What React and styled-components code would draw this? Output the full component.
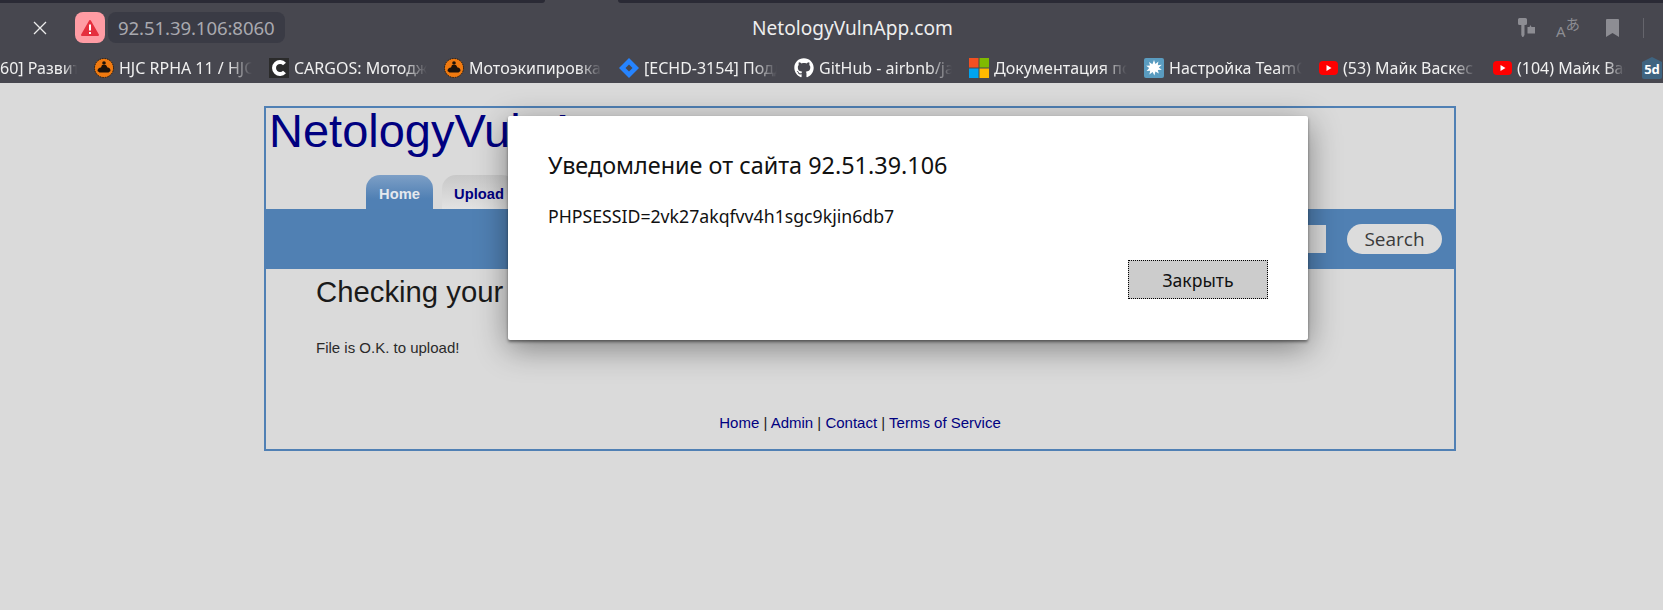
import React from "react";
import styled, { createGlobalStyle } from "styled-components";
import { FaGithub } from "react-icons/fa";

const GlobalStyle = createGlobalStyle`
    html, body {
        margin: 0;
        padding: 0;
        height: 100%;
        overflow: hidden;
        background: #dadada;
    }
`;

const Screen = styled.div`
    position: relative;
    width: 1663px;
    height: 610px;
    overflow: hidden;
    background: #dadada;
`;

/* browser chrome */
const Chrome = styled.header`
    height: 83px;
    background: #47474f;
    font-family: "Noto Sans", sans-serif;
`;

const TabStrip = styled.div`
    display: flex;
    justify-content: space-between;
    height: 3px;
`;

const TabStripPart = styled.div`
    width: ${props => props.$width}px;
    background: #2a2a35;
    border-radius: ${props => props.$right ? "0 0 0 3px" : "0 0 3px 0"};
`;

const AddressBar = styled.div`
    display: flex;
    align-items: center;
    height: 49px;
`;

const CloseButton = styled.div`
    display: flex;
    justify-content: center;
    width: 14px;
    margin: 0 28px 0 33px;
`;

const WarningBadge = styled.div`
    display: flex;
    align-items: center;
    justify-content: center;
    width: 30px;
    height: 31px;
    border-radius: 8px;
    background: #ff9ca4;
`;

const UrlPill = styled.div`
    display: flex;
    align-items: center;
    width: 177px;
    height: 31px;
    margin-left: 3px;
    padding-left: 10px;
    box-sizing: border-box;
    border-radius: 8px;
    background: #3a3b45;
    color: #a9a9af;
    font-size: 18.6px;
    letter-spacing: -0.1px;
    white-space: nowrap;
`;

const PageTitle = styled.div`
    width: 200px;
    margin-left: 467px;
    color: #eeeeee;
    font-size: 19.1px;
    white-space: nowrap;
`;

const ToolIcons = styled.div`
    display: flex;
    align-items: center;
    margin-left: auto;
    margin-right: 19px;
`;

const ToolIcon = styled.div`
    display: flex;
    align-items: center;
    justify-content: center;
    margin-right: ${props => props.$gap}px;
`;

const TranslateIcon = styled.div`
    position: relative;
    width: 24px;
    height: 24px;
    color: #8d8d93;
    font-family: "Noto Sans CJK JP", sans-serif;
`;

const TranslateLatin = styled.span`
    position: absolute;
    left: 0;
    bottom: -1px;
    font-family: "Noto Sans", sans-serif;
    font-size: 15px;
`;

const TranslateKana = styled.span`
    position: absolute;
    top: -3px;
    right: 0;
    font-size: 14.5px;
`;

const Divider = styled.div`
    width: 1px;
    height: 20px;
    background: #65656c;
`;

const Bookmarks = styled.nav`
    display: flex;
    align-items: center;
    gap: 17px;
    height: 31px;
    overflow: hidden;
    white-space: nowrap;
`;

const Bookmark = styled.div`
    display: flex;
    flex: none;
    align-items: center;
    gap: 5px;
`;

const BookmarkLabel = styled.span`
    display: block;
    width: ${props => props.$width || 133}px;
    margin-top: 1px;
    overflow: hidden;
    color: #f0f0f0;
    font-size: 16px;
    line-height: 22px;
    -webkit-mask-image: linear-gradient(to right, #000 82%, transparent 100%);
    mask-image: linear-gradient(to right, #000 82%, transparent 100%);
`;

/* the site under the alert */
const Frame = styled.main`
    box-sizing: border-box;
    width: 1192px;
    height: 345px;
    margin: 23px 0 0 264px;
    border: 2px solid #5080b4;
    font-family: "Liberation Sans", Arial, sans-serif;
`;

const SiteTitle = styled.h1`
    height: 67px;
    margin: 0;
    padding-left: 3px;
    color: #000080;
    font-size: 47px;
    font-weight: 400;
    line-height: 46px;
`;

const Tabs = styled.div`
    display: flex;
    gap: 9px;
    height: 34px;
    padding-left: 100px;
`;

const Tab = styled.div`
    display: flex;
    justify-content: center;
    width: ${props => props.$width}px;
    padding-top: 11px;
    box-sizing: border-box;
    border-radius: 14px 14px 0 0;
    background: ${props => props.$active
        ? "linear-gradient(#7d9fc6, #5080b4 70%)"
        : "linear-gradient(#c8c8c8, #e2e2e2)"};
    color: ${props => props.$active ? "#e4e8ee" : "#000080"};
    font-size: 14.7px;
    font-weight: 700;
`;

const SearchBar = styled.div`
    display: flex;
    align-items: center;
    justify-content: flex-end;
    gap: 21px;
    height: 60px;
    padding-right: 12px;
    background: #5080b3;
`;

const SearchInput = styled.div`
    width: 120px;
    height: 28px;
    background: #dcdcdc;
`;

const SearchButton = styled.div`
    display: flex;
    align-items: center;
    justify-content: center;
    width: 95px;
    height: 30px;
    border-radius: 15px;
    background: #dcdcdc;
    color: #3a3a3a;
    font-family: "Open Sans", sans-serif;
    font-size: 19px;
`;

const Content = styled.section`
    padding-left: 50px;
    color: #1a1a1a;
`;

const Heading = styled.h2`
    height: 56px;
    margin: 0;
    padding-top: 6px;
    box-sizing: border-box;
    font-size: 29.3px;
    font-weight: 400;
    line-height: 34px;
`;

const Message = styled.p`
    height: 89px;
    margin: 0;
    padding-top: 15px;
    box-sizing: border-box;
    color: #2a2a2a;
    font-size: 15px;
    line-height: 16px;
`;

const Footer = styled.footer`
    color: #1a1a1a;
    font-size: 15px;
    line-height: 18px;
    text-align: center;
`;

const FooterLink = styled.a`
    color: #000080;
    text-decoration: none;
`;

/* the alert */
const Alert = styled.div`
    position: absolute;
    top: 116px;
    left: 508px;
    display: flex;
    flex-direction: column;
    box-sizing: border-box;
    width: 800px;
    height: 224px;
    padding: 0 40px;
    background: #ffffff;
    border-radius: 2px;
    box-shadow: 0 2px 3px rgba(0, 0, 0, 0.45), 0 8px 32px rgba(0, 0, 0, 0.42);
    font-family: "Noto Sans", sans-serif;
    color: #111111;
`;

const AlertTitle = styled.div`
    margin-top: 35px;
    font-size: 23.4px;
    line-height: 29px;
`;

const AlertText = styled.div`
    margin-top: 25px;
    font-size: 17.7px;
    line-height: 22px;
    white-space: nowrap;
`;

const AlertActions = styled.div`
    display: flex;
    justify-content: flex-end;
    margin-top: auto;
    margin-bottom: 41px;
`;

const CloseAlert = styled.button`
    width: 140px;
    height: 39px;
    padding: 0;
    border: 1px dotted #000000;
    border-radius: 0;
    background: #cccccc;
    color: #111111;
    font-family: "Noto Sans", sans-serif;
    font-size: 17.6px;
`;

const MotoIcon = () => (
    <svg width="20" height="20" viewBox="0 0 20 20">
        <circle cx="10" cy="10" r="9.500" fill="#f07a10" stroke="#2a1a0c" strokeWidth="1" strokeDasharray="1.500 1" />
        <path d="M3.500 13c0-2 1.500-3.500 3.500-3.500L8 7h4l1.500 2.500c2 0 3 1.500 3 3.500l-2 1.500h-9z" fill="#1c120a" />
        <circle cx="10" cy="5" r="1.800" fill="#1c120a" />
    </svg>
);

const CargosIcon = () => (
    <svg width="20" height="20" viewBox="0 0 20 20">
        <rect width="20" height="20" fill="#2b2b2b" />
        <path d="M15.500 6A6 6 0 1 0 15.500 14" fill="none" stroke="#ffffff" strokeWidth="4" />
    </svg>
);

const JiraIcon = () => (
    <svg width="20" height="20" viewBox="0 0 20 20">
        <path d="M10 0l10 10-10 10L0 10z" fill="#2684ff" />
        <path d="M10 6.500L13.500 10 10 13.500 6.500 10z" fill="#47474f" />
    </svg>
);

const MicrosoftIcon = () => (
    <svg width="20" height="20" viewBox="0 0 20 20">
        <rect width="9.500" height="9.500" fill="#f25022" />
        <rect x="10.500" width="9.500" height="9.500" fill="#7fba00" />
        <rect y="10.500" width="9.500" height="9.500" fill="#00a4ef" />
        <rect x="10.500" y="10.500" width="9.500" height="9.500" fill="#ffb900" />
    </svg>
);

const TeamIcon = () => (
    <svg width="20" height="20" viewBox="0 0 20 20">
        <rect width="20" height="20" rx="2" fill="#5a9cc0" />
        <path d="M10 2l1.400 4 3-2.600-.6 3.800 4-.4-3 2.800 3 2.200-4 .2 1 3.600-3.400-2-1 4-1.800-3.600L5.400 16.500l.8-3.800-3.600.2 2.600-3-3-2.200 3.800-.2-1-3.500 3.400 2.200z" fill="#ffffff" />
    </svg>
);

const YoutubeIcon = () => (
    <svg width="19" height="14" viewBox="0 0 19 14">
        <rect width="19" height="14" rx="4" fill="#ff0000" />
        <path d="M7.500 4l5 3-5 3z" fill="#ffffff" />
    </svg>
);

const FiveDIcon = () => (
    <svg width="20" height="22" viewBox="0 0 20 22">
        <path d="M10 0l10 5v15a2 2 0 0 1-2 2H2a2 2 0 0 1-2-2V5z" fill="#3f6480" />
        <text x="10" y="17" textAnchor="middle" fontFamily="Noto Sans" fontWeight="700" fontSize="13" fill="#ffffff">5d</text>
    </svg>
);

const bookmarks = [
    { label: "HJC RPHA 11 / HJC RPHA", icon: <MotoIcon /> },
    { label: "CARGOS: Мотоджинсы", icon: <CargosIcon /> },
    { label: "Мотоэкипировка и", icon: <MotoIcon /> },
    { label: "[ECHD-3154] Поддержка", icon: <JiraIcon /> },
    { label: "GitHub - airbnb/javascript", icon: <FaGithub size={20} color="#ffffff" /> },
    { label: "Документация по", icon: <MicrosoftIcon /> },
    { label: "Настройка TeamCity", icon: <TeamIcon /> },
    { label: "(53) Майк Васкес", icon: <YoutubeIcon /> },
    { label: "(104) Майк Васкес", icon: <YoutubeIcon />, width: 108 },
];

const App = () => {
    return (
        <Screen>
            <GlobalStyle />
            <Chrome>
                <TabStrip>
                    <TabStripPart $width={545} />
                    <TabStripPart $width={1045} $right />
                </TabStrip>
                <AddressBar>
                    <CloseButton>
                        <svg width="14" height="14" viewBox="0 0 14 14">
                            <path d="M1 1l12 12M13 1L1 13" stroke="#ececec" strokeWidth="1.300" />
                        </svg>
                    </CloseButton>
                    <WarningBadge>
                        <svg width="18" height="16" viewBox="0 0 18 16">
                            <path d="M9 1L17 15H1z" fill="#e52f3e" stroke="#e52f3e" strokeWidth="2" strokeLinejoin="round" />
                            <rect x="8" y="4.500" width="2" height="6" fill="#ffffff" />
                            <rect x="8" y="12" width="2" height="2" fill="#ffffff" />
                        </svg>
                    </WarningBadge>
                    <UrlPill>92.51.39.106:8060</UrlPill>
                    <PageTitle>NetologyVulnApp.com</PageTitle>
                    <ToolIcons>
                        <ToolIcon $gap={21}>
                            <svg width="17" height="19" viewBox="0 0 17 19" fill="#8d8d93">
                                <path d="M0 1.500A1.500 1.500 0 0 1 1.500 0h6A1.500 1.500 0 0 1 9 1.500v4A1.500 1.500 0 0 1 7.500 7H6.500v10l-1.200 2h-1l-1-2V7h-1.800A1.500 1.500 0 0 1 0 5.500z" />
                                <path d="M9.500 9h2l1-2 1 2h3.500v6.500h-7.500z" />
                            </svg>
                        </ToolIcon>
                        <ToolIcon $gap={26}>
                            <TranslateIcon>
                                <TranslateLatin>A</TranslateLatin>
                                <TranslateKana>あ</TranslateKana>
                            </TranslateIcon>
                        </ToolIcon>
                        <ToolIcon $gap={24}>
                            <svg width="13" height="18" viewBox="0 0 13 18">
                                <path d="M0 1a1 1 0 0 1 1-1h11a1 1 0 0 1 1 1v17l-6.500-4L0 18z" fill="#8d8d93" />
                            </svg>
                        </ToolIcon>
                        <Divider />
                    </ToolIcons>
                </AddressBar>
                <Bookmarks>
                    <BookmarkLabel $width={77}>60] Развитие</BookmarkLabel>
                    {bookmarks.map(item => (
                        <Bookmark key={item.label}>
                            {item.icon}
                            <BookmarkLabel $width={item.width}>{item.label}</BookmarkLabel>
                        </Bookmark>
                    ))}
                    <Bookmark>
                        <FiveDIcon />
                    </Bookmark>
                </Bookmarks>
            </Chrome>
            <Frame>
                <SiteTitle>NetologyVulnApp.com</SiteTitle>
                <Tabs>
                    <Tab $active $width={67}>Home</Tab>
                    <Tab $width={74}>Upload</Tab>
                </Tabs>
                <SearchBar>
                    <SearchInput />
                    <SearchButton>Search</SearchButton>
                </SearchBar>
                <Content>
                    <Heading>Checking your file</Heading>
                    <Message>File is O.K. to upload!</Message>
                </Content>
                <Footer>
                    <FooterLink href="#">Home</FooterLink> | <FooterLink href="#">Admin</FooterLink> | <FooterLink href="#">Contact</FooterLink> | <FooterLink href="#">Terms of Service</FooterLink>
                </Footer>
            </Frame>
            <Alert>
                <AlertTitle>Уведомление от сайта 92.51.39.106</AlertTitle>
                <AlertText>PHPSESSID=2vk27akqfvv4h1sgc9kjin6db7</AlertText>
                <AlertActions>
                    <CloseAlert>Закрыть</CloseAlert>
                </AlertActions>
            </Alert>
        </Screen>
    );
};

export default App;
